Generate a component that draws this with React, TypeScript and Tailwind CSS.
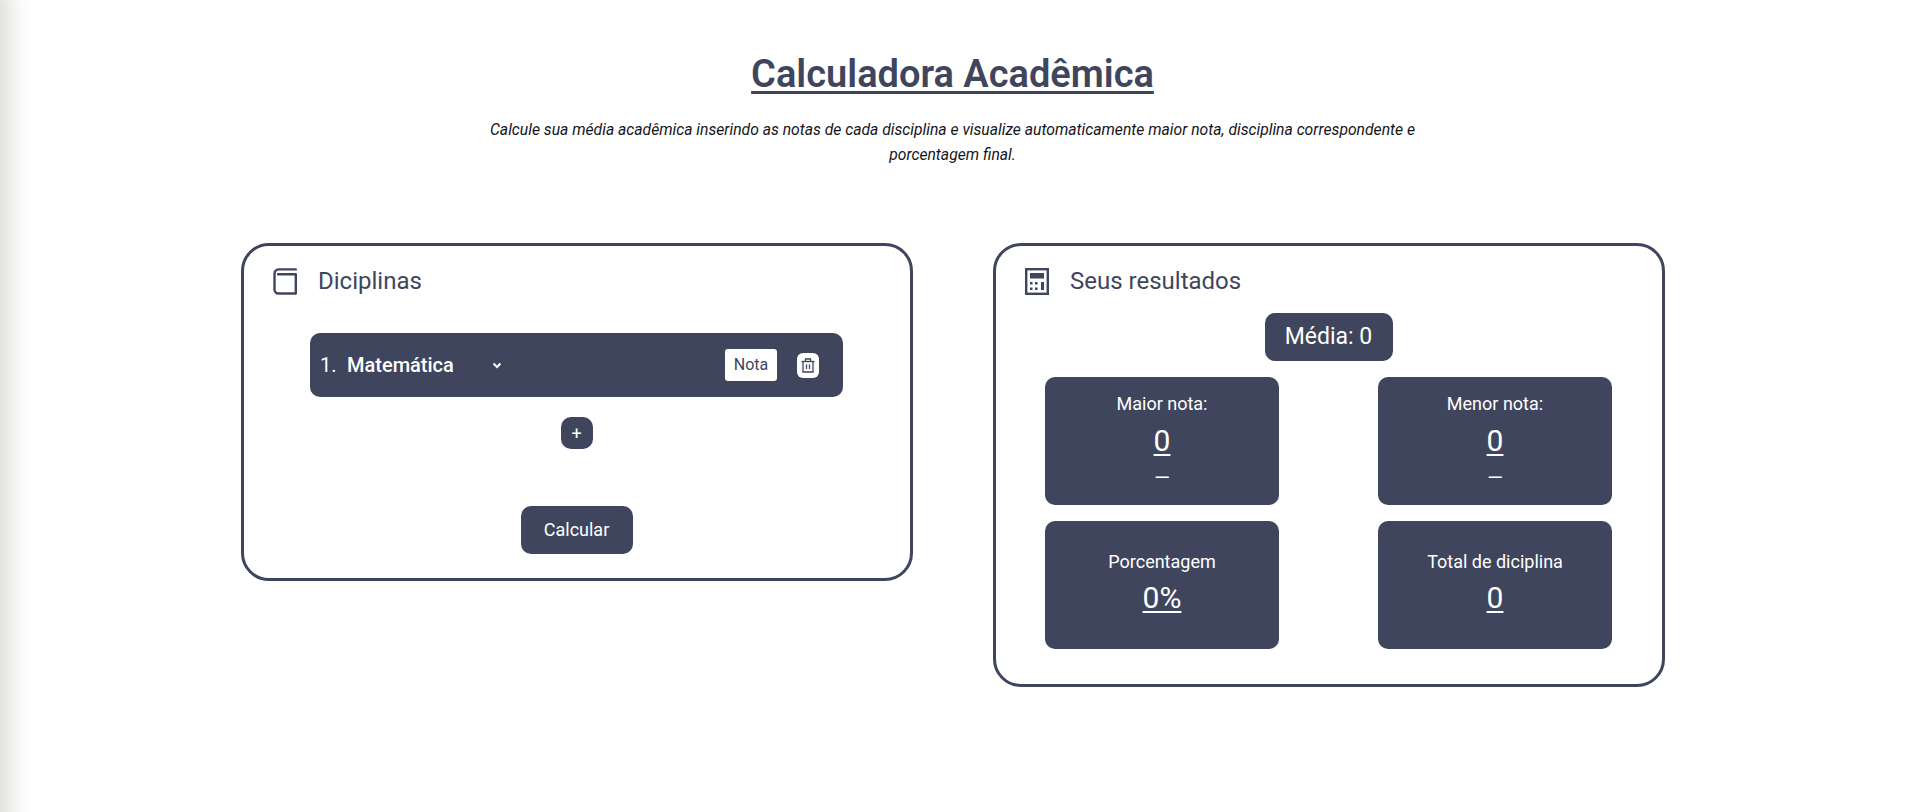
import React from 'react';

const BookIcon = () => (
  <svg width="24" height="27" viewBox="0 0 24 27" fill="none" stroke="#40455e" strokeWidth="2.400" strokeLinecap="round" strokeLinejoin="round">
    <path d="M22.800 1.400H5.500A4 4 0 0 0 1.500 5.400V21.500A4 4 0 0 0 5.500 25.500H22.800V6.300H5" />
  </svg>
);

const CalcIcon = () => (
  <svg width="24" height="27" viewBox="0 0 24 27" fill="none">
    <rect x="1.200" y="1.200" width="21.600" height="24.600" stroke="#40455e" strokeWidth="2.400" />
    <rect x="5" y="5" width="14" height="5.500" fill="#40455e" />
    <rect x="5" y="14" width="2.500" height="2.500" fill="#40455e" />
    <rect x="10" y="14" width="2.500" height="2.500" fill="#40455e" />
    <rect x="16" y="14" width="3" height="8" fill="#40455e" />
    <rect x="5" y="19.500" width="2.500" height="2.500" fill="#40455e" />
    <rect x="10" y="19.500" width="2.500" height="2.500" fill="#40455e" />
  </svg>
);

const TrashIcon = () => (
  <svg width="14" height="15" viewBox="0 0 14 15" fill="none" stroke="#40455e" strokeWidth="1.300">
    <path d="M0.500 3.500H13.500" />
    <path d="M4.500 3.500V1H9.500V3.500" />
    <path d="M2 3.500V14H12V3.500" />
    <path d="M5.500 6.500V11M8.500 6.500V11" />
  </svg>
);

const Stat = ({ label, value, extra }: { label: string; value: string; extra?: boolean }) => (
  <div className={extra ? 'flex h-[128px] w-[234px] flex-col items-center rounded-[10px] bg-[#40455e] pt-[16px] text-white' : 'flex h-[128px] w-[234px] flex-col items-center rounded-[10px] bg-[#40455e] pt-[30px] text-white'}>
    <p className="text-[18px] leading-[22px]">{label}</p>
    <p className={extra ? 'mt-[8px] text-[30px] leading-[36px] underline decoration-2 underline-offset-[3px]' : 'mt-[7px] text-[30px] leading-[36px] underline decoration-2 underline-offset-[3px]'}>{value}</p>
    {extra && <p className="mt-[7px] text-[20px] leading-[24px]">—</p>}
  </div>
);

const App: React.FC = () => {
  return (
    <div className="relative min-h-[812px] overflow-hidden bg-white pt-[49px] font-['Roboto',sans-serif] text-[#40455e]">
      <div className="absolute -bottom-[60px] top-0 -left-[20px] w-[20px] shadow-[0_0_22px_10px_#dcddd6]" />

      <header className="mx-auto flex w-[960px] flex-col items-center text-center">
        <h1 className="text-[38px] font-semibold leading-[50px] underline decoration-[3px] underline-offset-[4px]">
          Calculadora Acadêmica
        </h1>
        <p className="mt-[18px] text-[15.7px] italic leading-[25px] text-[#14141c]">
          Calcule sua média acadêmica inserindo as notas de cada disciplina e visualize automaticamente maior nota, disciplina correspondente e porcentagem final.
        </p>
      </header>

      <main className="ml-[241px] mt-[76px] flex w-[1424px] items-start justify-between">
        <section className="h-[338px] w-[672px] rounded-[28px] border-[3px] border-[#40455e] pl-[29px] pr-[30px] pt-[19px]">
          <div className="flex items-center gap-[21px]">
            <BookIcon />
            <h2 className="text-[24px] leading-[32px]">Diciplinas</h2>
          </div>
          <div className="mx-auto mt-[36px] flex h-[64px] w-[533px] items-center rounded-[10px] bg-[#40455e] pl-[10px] pr-[24px] text-white">
            <span className="w-[15px] text-[20px]">1.</span>
            <span className="ml-[12px] text-[20px] font-medium">Matemática</span>
            <svg className="ml-[38px]" width="10" height="7" viewBox="0 0 10 7" fill="none" stroke="white" strokeWidth="2">
              <path d="M1.500 1.500L5 5L8.500 1.500" />
            </svg>
            <div className="ml-auto flex h-[32px] w-[52px] items-center justify-center rounded-[3px] bg-white text-[16px] text-[#40455e]">
              Nota
            </div>
            <button className="ml-[20px] flex h-[25px] w-[22px] items-center justify-center rounded-[6px] bg-white">
              <TrashIcon />
            </button>
          </div>
          <button className="mx-auto mt-[20px] flex h-[32px] w-[32px] items-center justify-center rounded-[10px] bg-[#40455e] text-[18px] text-white">
            +
          </button>
          <button className="mx-auto mt-[57px] flex h-[48px] w-[112px] items-center justify-center rounded-[10px] bg-[#40455e] pb-[2px] text-[18px] text-white">
            Calcular
          </button>
        </section>

        <section className="h-[444px] w-[672px] rounded-[28px] border-[3px] border-[#40455e] pl-[49px] pr-[50px] pt-[19px]">
          <div className="-ml-[20px] flex items-center gap-[21px]">
            <CalcIcon />
            <h2 className="text-[24px] leading-[32px]">Seus resultados</h2>
          </div>
          <div className="mx-auto mt-[16px] flex h-[48px] w-[128px] items-center justify-center rounded-[10px] bg-[#40455e] text-[23px] text-white">
            Média: 0
          </div>
          <div className="mt-[16px] grid grid-cols-[234px_234px] justify-between gap-y-[16px]">
            <Stat label="Maior nota:" value="0" extra />
            <Stat label="Menor nota:" value="0" extra />
            <Stat label="Porcentagem" value="0%" />
            <Stat label="Total de diciplina" value="0" />
          </div>
        </section>
      </main>
    </div>
  );
};

export default App;
